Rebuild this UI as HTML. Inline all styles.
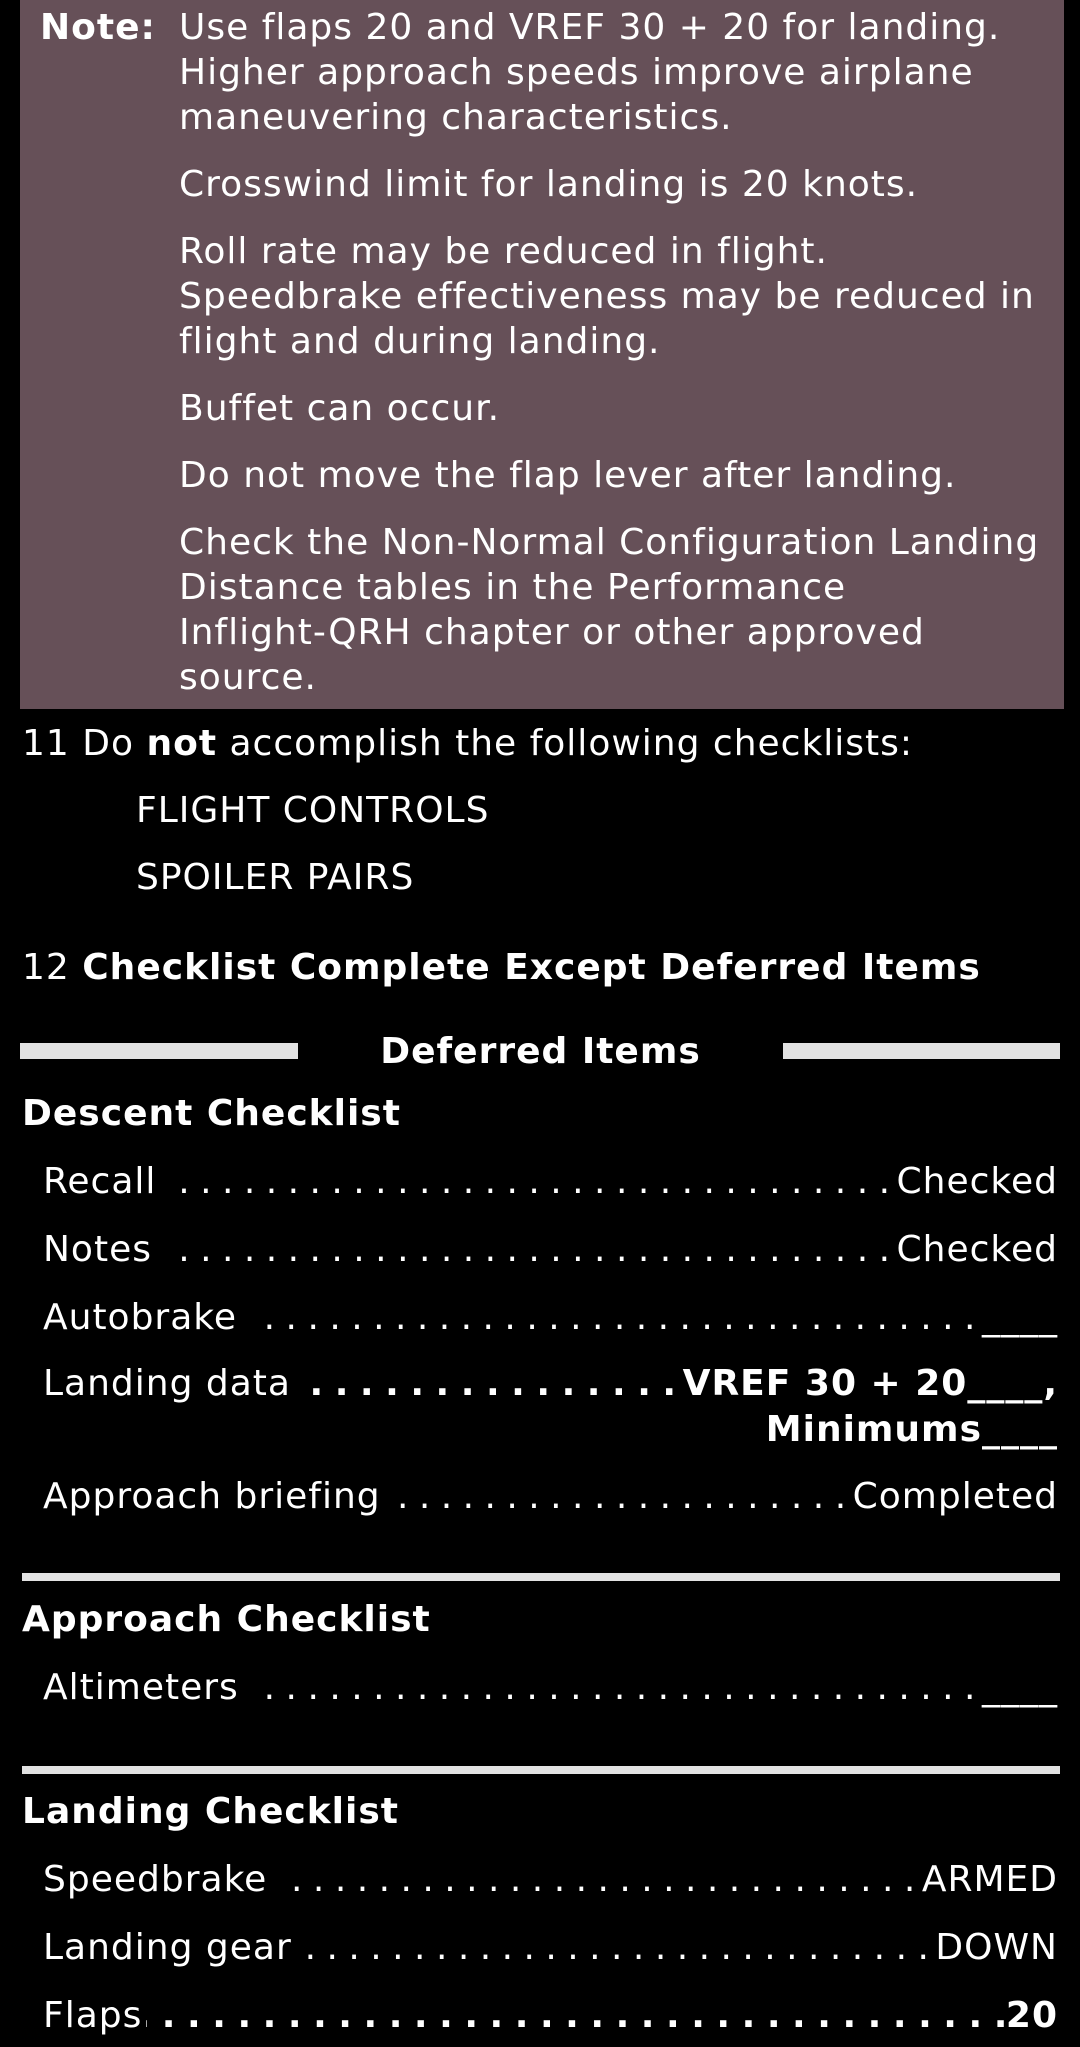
<!DOCTYPE html>
<html><head><meta charset="utf-8"><style>
html,body{margin:0;padding:0;background:#000;}
body{width:1080px;height:2047px;position:relative;overflow:hidden;font-family:"DejaVu Sans","Liberation Sans",sans-serif;color:#fff;font-size:36px;letter-spacing:1.0px;}
.box{position:absolute;left:20px;top:0;width:1044px;height:709px;background:#665058;}
.t{position:absolute;line-height:45px;white-space:nowrap;}
b{font-weight:bold;}
.row{position:absolute;left:43px;width:1015px;display:flex;line-height:45px;white-space:nowrap;}
.row .l{flex:none;}
.row .d{flex:1;overflow:hidden;direction:rtl;text-align:left;letter-spacing:-1.5px;word-spacing:2px;margin:0 8px 0 14px;}
.row .v{flex:none;}
.bar{position:absolute;background:#e2e2e2;}
</style></head><body>
<div class="box"></div>
<div class="t" style="left:40px;top:5px;"><b>Note:</b></div>
<div class="t" style="left:179px;top:5px;">Use flaps 20 and VREF 30 + 20 for landing.</div>
<div class="t" style="left:179px;top:50px;">Higher approach speeds improve airplane</div>
<div class="t" style="left:179px;top:95px;">maneuvering characteristics.</div>
<div class="t" style="left:179px;top:162px;">Crosswind limit for landing is 20 knots.</div>
<div class="t" style="left:179px;top:229px;">Roll rate may be reduced in flight.</div>
<div class="t" style="left:179px;top:274px;">Speedbrake effectiveness may be reduced in</div>
<div class="t" style="left:179px;top:319px;">flight and during landing.</div>
<div class="t" style="left:179px;top:386px;">Buffet can occur.</div>
<div class="t" style="left:179px;top:453px;">Do not move the flap lever after landing.</div>
<div class="t" style="left:179px;top:520px;">Check the Non-Normal Configuration Landing</div>
<div class="t" style="left:179px;top:565px;">Distance tables in the Performance</div>
<div class="t" style="left:179px;top:610px;">Inflight-QRH chapter or other approved</div>
<div class="t" style="left:179px;top:655px;">source.</div>

<div class="t" style="left:22px;top:721px;">11 Do <b>not</b> accomplish the following checklists:</div>
<div class="t" style="left:136px;top:788px;">FLIGHT CONTROLS</div>
<div class="t" style="left:136px;top:855px;">SPOILER PAIRS</div>
<div class="t" style="left:22px;top:945px;">12 <b>Checklist Complete Except Deferred Items</b></div>

<div class="bar" style="left:20px;top:1043px;width:278px;height:16px;"></div>
<div class="bar" style="left:783px;top:1043px;width:277px;height:16px;"></div>
<div class="t" style="left:298px;width:485px;text-align:center;top:1029px;"><b>Deferred Items</b></div>

<div class="t" style="left:22px;top:1091px;"><b>Descent Checklist</b></div>
<div class="row" style="top:1159px;"><span class="l">Recall</span><span class="d">. . . . . . . . . . . . . . . . . . . . . . . . . . . . . . . . . . . . .</span><span class="v">Checked</span></div>
<div class="row" style="top:1227px;"><span class="l">Notes</span><span class="d">. . . . . . . . . . . . . . . . . . . . . . . . . . . . . . . . . . . . .</span><span class="v">Checked</span></div>
<div class="row" style="top:1295px;"><span class="l">Autobrake</span><span class="d">. . . . . . . . . . . . . . . . . . . . . . . . . . . . . . . . . . . . . </span><span class="v">____</span></div>
<div class="row" style="top:1361px;"><span class="l">Landing data</span><span class="d"><b>. . . . . . . . . . . . . . . . . . . . . . . . . . . . . . .</b></span><span class="v"><b>VREF 30 + 20____,</b></span></div>
<div class="t" style="right:22px;top:1407px;"><b>Minimums____</b></div>
<div class="row" style="top:1474px;"><span class="l">Approach briefing</span><span class="d">. . . . . . . . . . . . . . . . . . . . . . . . . . . . . . . </span><span class="v">Completed</span></div>

<div class="bar" style="left:22px;top:1573px;width:1038px;height:8px;"></div>
<div class="t" style="left:22px;top:1597px;"><b>Approach Checklist</b></div>
<div class="row" style="top:1665px;"><span class="l">Altimeters</span><span class="d">. . . . . . . . . . . . . . . . . . . . . . . . . . . . . . . . . . . . . </span><span class="v">____</span></div>

<div class="bar" style="left:22px;top:1766px;width:1038px;height:8px;"></div>
<div class="t" style="left:22px;top:1789px;"><b>Landing Checklist</b></div>
<div class="row" style="top:1857px;"><span class="l">Speedbrake</span><span class="d">. . . . . . . . . . . . . . . . . . . . . . . . . . . . . . . . . . . . .</span><span class="v">ARMED</span></div>
<div class="row" style="top:1925px;"><span class="l">Landing gear</span><span class="d">. . . . . . . . . . . . . . . . . . . . . . . . . . . . . . . . . . . . . </span><span class="v">DOWN</span></div>
<div class="row" style="top:1993px;"><span class="l">Flaps</span><span class="d" style="margin:0 0 0 4px"><b>. . . . . . . . . . . . . . . . . . . . . . . . . . . . . . . . . . . . . . .</b></span><span class="v"><b>20</b></span></div>
</body></html>
